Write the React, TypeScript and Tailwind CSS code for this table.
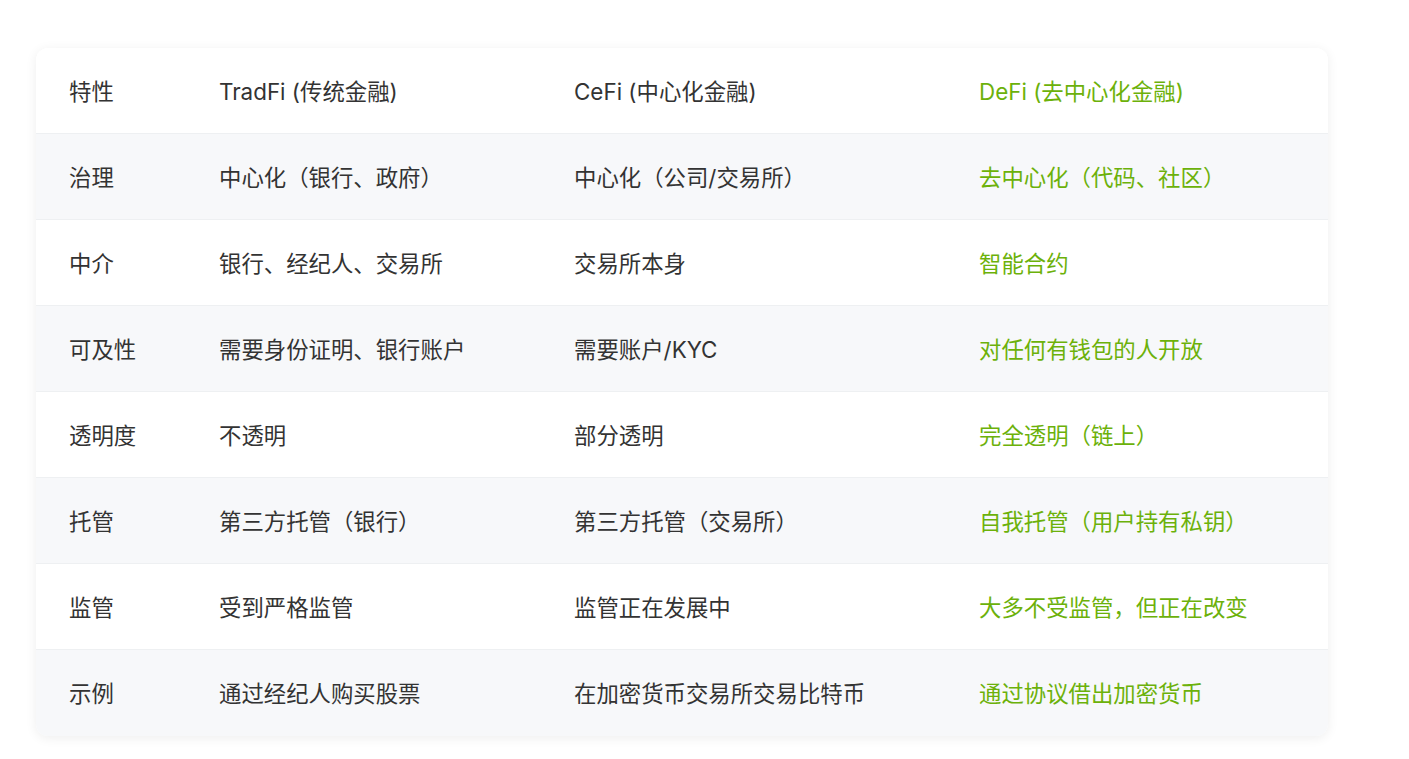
const rows: string[][] = [
  ["特性", "TradFi (传统金融)", "CeFi (中心化金融)", "DeFi (去中心化金融)"],
  ["治理", "中心化（银行、政府）", "中心化（公司/交易所）", "去中心化（代码、社区）"],
  ["中介", "银行、经纪人、交易所", "交易所本身", "智能合约"],
  ["可及性", "需要身份证明、银行账户", "需要账户/KYC", "对任何有钱包的人开放"],
  ["透明度", "不透明", "部分透明", "完全透明（链上）"],
  ["托管", "第三方托管（银行）", "第三方托管（交易所）", "自我托管（用户持有私钥）"],
  ["监管", "受到严格监管", "监管正在发展中", "大多不受监管，但正在改变"],
  ["示例", "通过经纪人购买股票", "在加密货币交易所交易比特币", "通过协议借出加密货币"],
];

export default function App() {
  return (
    <div
      className="min-h-screen bg-white pt-[48px] pl-[36px]"
      style={{ fontFamily: 'Inter, "Noto Sans CJK SC", sans-serif' }}
    >
      <div className="w-[1292px] overflow-hidden rounded-[12px] bg-white shadow-[0_2px_12px_rgba(0,0,0,0.07)]">
        {rows.map((r, i) => (
          <div
            key={i}
            className={`grid h-[86px] grid-cols-[150px_355px_405px_382px] items-center text-[22.4px] ${
              i % 2 === 1 ? "bg-[#f7f8fa]" : "bg-white"
            } ${i < rows.length - 1 ? "border-b border-[#eef0f2]" : ""}`}
          >
            {r.map((c, j) => (
              <div
                key={j}
                className={`pl-[33px] pt-[2px] ${j === 3 ? "text-[#6cb10a]" : "text-[#333333]"}`}
              >
                {c}
              </div>
            ))}
          </div>
        ))}
      </div>
    </div>
  );
}
